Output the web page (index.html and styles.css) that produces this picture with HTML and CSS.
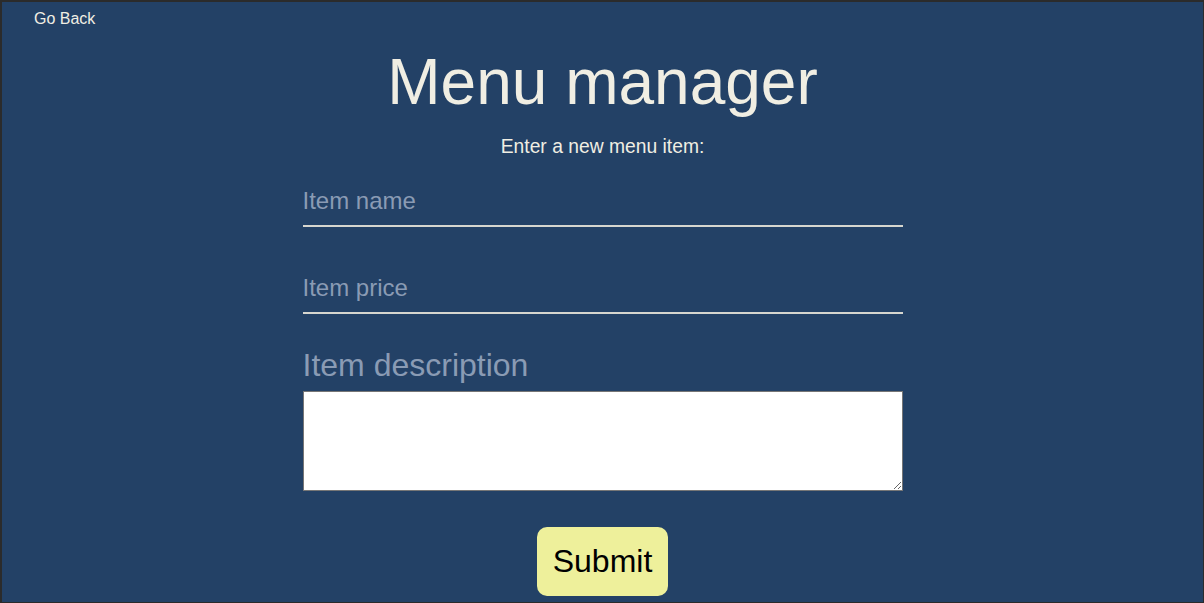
FILE: index.html
```html
<!DOCTYPE html>
<html lang="en">
<head>
<meta charset="utf-8">
<title>Menu manager</title>
<link rel="stylesheet" href="styles.css">
</head>
<body>
<div class="page">
  <header class="topbar">
    <a class="back" href="#">Go Back</a>
  </header>
  <main class="main">
    <h1 class="title">Menu manager</h1>
    <p class="subtitle">Enter a new menu item:</p>
    <form class="form">
      <input class="field field-name" type="text" placeholder="Item name">
      <input class="field field-price" type="text" placeholder="Item price">
      <label class="desc-label" for="desc">Item description</label>
      <textarea id="desc" class="desc"></textarea>
      <button class="submit" type="button">Submit</button>
    </form>
  </main>
</div>
</body>
</html>
```

FILE: styles.css
```css
html, body {
  margin: 0;
  padding: 0;
  height: 100%;
}

body {
  font-family: "Liberation Sans", Arial, Helvetica, sans-serif;
  background: #2b2b2b;
  overflow: hidden;
}

.page {
  box-sizing: border-box;
  height: 100vh;
  border-style: solid;
  border-color: #2b2b2b;
  border-width: 2px 1px 1px 2px;
  background: #234166;
  color: #f0eee3;
  display: flex;
  flex-direction: column;
}

.topbar {
  padding: 8px 0 0 32px;
}

.back {
  color: #f0eee3;
  text-decoration: none;
  font-size: 16px;
}

.main {
  display: flex;
  flex-direction: column;
  align-items: center;
}

.title {
  margin: 17px 0 0;
  font-size: 64px;
  font-weight: normal;
  line-height: normal;
  color: #f0eee3;
}

.subtitle {
  margin: 17px 0 0;
  font-size: 19.3px;
  line-height: normal;
}

.form {
  width: 600px;
  display: flex;
  flex-direction: column;
  align-items: stretch;
}

.field {
  box-sizing: content-box;
  margin: 0;
  padding: 0 0 10px;
  height: 28px;
  line-height: 28px;
  font-family: "Liberation Sans", Arial, sans-serif;
  font-size: 24px;
  color: #f0eee3;
  background: transparent;
  border: none;
  border-bottom: 2px solid #d6d6cf;
  outline: none;
}

.field::placeholder {
  color: #8a9bb4;
}

.field-name {
  margin-top: 29px;
}

.field-price {
  margin-top: 47px;
}

.desc-label {
  margin-top: 33px;
  font-size: 32px;
  line-height: normal;
  color: #8a9bb4;
}

.desc {
  box-sizing: border-box;
  margin-top: 7px;
  width: 600px;
  height: 100px;
  border: 1px solid #767676;
  background: #ffffff;
  padding: 2px;
  font-family: "Liberation Sans", Arial, sans-serif;
}

.submit {
  align-self: center;
  margin-top: 36px;
  padding: 16px;
  border: none;
  border-radius: 10px;
  background: #eef09b;
  color: #000000;
  font-family: "Liberation Sans", Arial, sans-serif;
  font-size: 32px;
  line-height: normal;
  cursor: pointer;
}
```
